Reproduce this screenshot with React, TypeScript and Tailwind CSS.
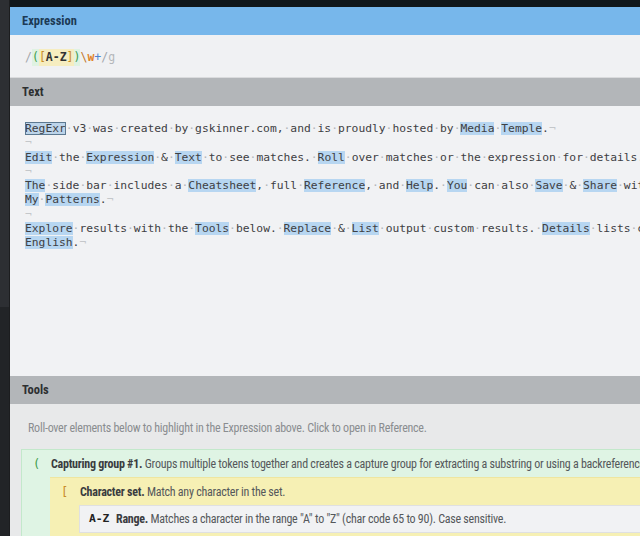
import React from "react";

const mono = { fontFamily: '"DejaVu Sans Mono", "Liberation Mono", monospace' };

const lines: { text: string; eol: boolean }[] = [
    { text: "RegExr v3 was created by gskinner.com, and is proudly hosted by Media Temple.", eol: true },
    { text: "", eol: true },
    { text: "Edit the Expression & Text to see matches. Roll over matches or the expression for details.", eol: true },
    { text: "", eol: true },
    { text: "The side bar includes a Cheatsheet, full Reference, and Help. You can also Save & Share with the Community, and view patterns you create or favorite in ", eol: false },
    { text: "My Patterns.", eol: true },
    { text: "", eol: true },
    { text: "Explore results with the Tools below. Replace & List output custom results. Details lists capture groups. Explain describes your expression in plain ", eol: false },
    { text: "English.", eol: true },
];

function Plain({ s }: { s: string }) {
    const parts = s.split(" ");
    return (
        <>
            {parts.map((p, i) => (
                <React.Fragment key={i}>
                    {i > 0 && <span className="text-[#b3b6ba]">·</span>}
                    {p}
                </React.Fragment>
            ))}
        </>
    );
}

function Line({ text, eol }: { text: string; eol: boolean }) {
    const out: React.ReactNode[] = [];
    const re = /[A-Z]\w+/g;
    let last = 0;
    let m: RegExpExecArray | null;
    while ((m = re.exec(text))) {
        out.push(<Plain key={"p" + last} s={text.slice(last, m.index)} />);
        const first = m.index === 0 && m[0] === "RegExr";
        out.push(
            <span
                key={"m" + m.index}
                className={
                    first
                        ? "bg-[#bcd4ea] outline outline-1 outline-[#5c7991] -outline-offset-1"
                        : "bg-[#b7d6f1]"
                }
            >
                {m[0]}
            </span>
        );
        last = m.index + m[0].length;
    }
    out.push(<Plain key="end" s={text.slice(last)} />);
    return (
        <div className="h-[14.3px] leading-[14.3px] whitespace-pre">
            {out}
            {eol && <span className="text-[#c4c7ca]">¬</span>}
        </div>
    );
}

function Header({ label, className }: { label: string; className: string }) {
    return (
        <div className={"h-[28px] flex items-center px-[12px] pt-[1px] shrink-0 " + className}>
            <span className="text-[12.5px] font-bold [font-stretch:75%]">{label}</span>
        </div>
    );
}

export default function App() {
    return (
        <div
            className="w-[640px] h-[536px] overflow-hidden flex bg-[#e8e9ea]"
            style={{ fontFamily: "Roboto, sans-serif" }}
        >
            <div className="w-[10px] shrink-0 flex flex-col border-r border-[#1c1d1f]">
                <div className="h-[307px] bg-[#2d2f33]" />
                <div className="flex-1 bg-[#222427]" />
            </div>
            <div className="flex-1 min-w-0 flex flex-col overflow-hidden">
                <div className="h-[7px] bg-[#10171a] shrink-0" />
                <Header label="Expression" className="bg-[#77b7eb] text-[#1c3a56]" />
                <div className="h-[43px] bg-[#f0f1f3] flex items-center pl-[15px] pt-[3px] text-[11.5px] shrink-0 border-b border-[#dadbdd]" style={mono}>
                    <span className="text-[#a3a7ab]">/</span>
                    <span className="text-[#3e9c4b] bg-[#dff2e2]">(</span>
                    <span className="bg-[#f6edc0] text-[#c98c27]">[</span>
                    <span className="bg-[#f6edc0] text-[#333] font-bold">A-Z</span>
                    <span className="bg-[#f6edc0] text-[#c98c27]">]</span>
                    <span className="text-[#3e9c4b] bg-[#dff2e2]">)</span>
                    <span className="text-[#c0782f]">\</span>
                    <span className="text-[#e0842b] font-bold">w</span>
                    <span className="text-[#4b83cf]">+</span>
                    <span className="text-[#a3a7ab]">/</span>
                    <span className="text-[#b4b7ba]">g</span>
                </div>
                <Header label="Text" className="bg-[#b3b6b9] text-[#2d2f31]" />
                <div className="h-[270px] bg-[#f1f2f4] pt-[16px] pl-[15px] text-[11.3px] text-[#3e4043] shrink-0" style={mono}>
                    {lines.map((l, i) => (
                        <Line key={i} text={l.text} eol={l.eol} />
                    ))}
                </div>
                <Header label="Tools" className="bg-[#b3b6b9] text-[#2d2f31]" />
                <div className="flex-1 bg-[#e8e9ea] text-[12px] [font-stretch:75%] tracking-[-0.25px]">
                    <div className="h-[45px] flex items-center pl-[18px] pt-[3px] text-[#8a8d90] whitespace-nowrap">
                        Roll-over elements below to highlight in the Expression above. Click to open in Reference.
                    </div>
                    <div className="ml-[11px] bg-[#dff4e4] border border-[#c3e8cb] w-[1000px]">
                        <div className="h-[27px] flex items-center whitespace-nowrap">
                            <span className="w-[29px] pl-[11px] text-[#3e9c4b]" style={mono}>(</span>
                            <span className="font-bold text-[#3a3c3f]">Capturing group #1.</span>
                            <span className="text-[#55585b]">&nbsp;Groups multiple tokens together and creates a capture group for extracting a substring or using a backreference.</span>
                        </div>
                        <div className="ml-[28px] bg-[#f6f0b4] border-t border-[#eee6a0]">
                            <div className="h-[27px] flex items-center whitespace-nowrap">
                                <span className="w-[30px] pl-[11px] text-[#c98c27]" style={mono}>[</span>
                                <span className="font-bold text-[#3a3c3f]">Character set.</span>
                                <span className="text-[#55585b]">&nbsp;Match any character in the set.</span>
                            </div>
                            <div className="ml-[29px] bg-[#f1f2f4] border border-[#dfe0e2] h-[28px] flex items-center whitespace-nowrap">
                                <span className="pl-[9px] w-[36px] font-bold text-[#222] text-[11.3px] tracking-normal [font-stretch:100%]" style={mono}>A-Z</span>
                                <span className="font-bold text-[#3a3c3f]">Range.</span>
                                <span className="text-[#55585b]">&nbsp;Matches a character in the range "A" to "Z" (char code 65 to 90). Case sensitive.</span>
                            </div>
                            <div className="h-[26px] flex items-center">
                                <span className="w-[30px] pl-[11px] text-[#c98c27]" style={mono}>]</span>
                            </div>
                        </div>
                    </div>
                </div>
            </div>
        </div>
    );
}
